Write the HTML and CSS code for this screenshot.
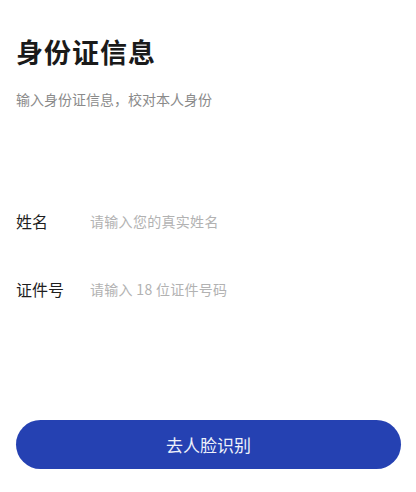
FILE: index.html
```html
<!DOCTYPE html>
<html lang="zh-CN">
<head>
<meta charset="utf-8">
<title>身份证信息</title>
<link rel="stylesheet" href="styles.css">
</head>
<body>
<main class="page">
  <h1 class="title">身份证信息</h1>
  <p class="subtitle">输入身份证信息，校对本人身份</p>
  <form class="form">
    <label class="row">
      <span class="label">姓名</span>
      <input class="field" type="text" placeholder="请输入您的真实姓名">
    </label>
    <label class="row">
      <span class="label">证件号</span>
      <input class="field" type="text" placeholder="请输入 18 位证件号码">
    </label>
  </form>
  <button class="submit" type="button">去人脸识别</button>
</main>
</body>
</html>
```
FILE: styles.css
```css
html, body {
  margin: 0;
  padding: 0;
  background: #ffffff;
}
body {
  font-family: "Noto Sans CJK SC", "Noto Sans", sans-serif;
  color: #1a1a1a;
}
.page {
  padding: 0 16px;
  display: flex;
  flex-direction: column;
}
.title {
  margin: 0;
  padding-top: 37px;
  font-size: 27px;
  line-height: 30px;
  font-weight: 700;
  letter-spacing: 1px;
  color: #1a1a1a;
}
.subtitle {
  margin: 22px 0 0;
  font-size: 14px;
  line-height: 20px;
  color: #8a8a8a;
}
.form {
  margin-top: 78px;
  display: flex;
  flex-direction: column;
}
.row {
  display: flex;
  align-items: center;
  height: 68px;
}
.label {
  width: 74px;
  flex: none;
  font-size: 16px;
  line-height: 22px;
  color: #1f1f1f;
}
.field {
  flex: 1;
  min-width: 0;
  border: none;
  outline: none;
  padding: 0;
  background: transparent;
  font-family: inherit;
  font-size: 14px;
  line-height: 20px;
  letter-spacing: 0.3px;
  color: #1f1f1f;
}
.field::placeholder {
  color: #b2b2b2;
}
.submit {
  margin-top: 97px;
  height: 49px;
  width: 385px;
  border: none;
  border-radius: 25px;
  background: #2541b2;
  color: #eef1fa;
  font-family: inherit;
  font-size: 17px;
  padding: 0;
}
```
